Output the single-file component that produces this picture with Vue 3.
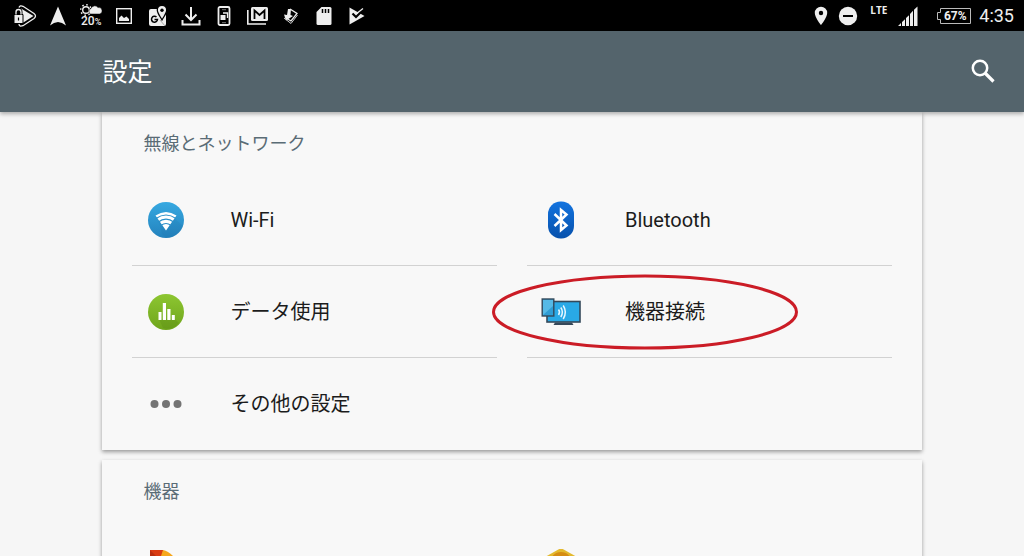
<script setup>
const wireless = [
  { id: 'wifi', label: 'Wi-Fi' },
  { id: 'bluetooth', label: 'Bluetooth' },
  { id: 'data', label: 'データ使用' },
  { id: 'device', label: '機器接続', marked: true },
  { id: 'more', label: 'その他の設定' },
]
</script>

<template>
  <div class="screen">
    <div class="status">
      <div class="notices">
        <span class="cell">
          <svg width="24" height="24" viewBox="0 0 24 24">
            <path d="M6 3.500 Q7 1 10 2.300 L21 9.500 Q24 12 21 14.500 L10 21.700 Q6 23 6 20" fill="none" stroke="#eee" stroke-width="1.300" />
            <path d="M8 4.500 L20.500 12 L8 20 Z" fill="#eee" />
            <path d="M1 10.500 h9 v9 h-9z" fill="#eee" stroke="#000" />
            <path d="M3 10.500 V8 a2.500 2.500 0 0 1 5 0 v2.500" fill="none" stroke="#000" stroke-width="3" />
            <path d="M3 10.500 V8 a2.500 2.500 0 0 1 5 0 v2.500" fill="none" stroke="#eee" stroke-width="1.300" />
            <path d="M5.500 13.500 v3" stroke="#000" stroke-width="1.200" />
          </svg>
        </span>
        <span class="cell">
          <svg width="18" height="20" viewBox="0 0 18 20"><path d="M9 0.500 L17 19.500 Q13 16 9 16 Q5 16 1 19.500 Z" fill="#eee" /></svg>
        </span>
        <span class="cell weather">
          <svg width="22" height="12" viewBox="0 0 22 12">
            <circle cx="6" cy="6" r="3.300" fill="none" stroke="#eee" stroke-width="1.400" />
            <circle cx="6" cy="6" r="5.300" fill="none" stroke="#eee" stroke-width="1.500" stroke-dasharray="1.500 2.600" />
            <path d="M10.500 10 a3 3 0 0 1 0.500 -5.500 a4 4 0 0 1 7 -1 a3.300 3.300 0 0 1 1.500 6.500 z" fill="#eee" stroke="#000" stroke-width="0.500" />
          </svg>
          <span class="rain">20<small>%</small></span>
        </span>
        <span class="cell">
          <svg width="18" height="18" viewBox="0 0 18 18">
            <rect x="1.700" y="1.700" width="14.600" height="14.600" fill="none" stroke="#eee" stroke-width="1.400" />
            <path d="M4 14 V11 L6.500 8.500 L9 11 L11.500 9.500 L14 12 V14 Z" fill="#eee" />
          </svg>
        </span>
        <span class="cell">
          <svg width="20" height="22" viewBox="0 0 20 22">
            <rect x="1" y="4" width="17" height="17" rx="2" fill="#eee" />
            <path d="M14 15 C11.500 10.500 9.300 8 9.300 5 a4.700 4.700 0 0 1 9.400 0 C18.700 8 16.500 10.500 14 15z" fill="#eee" stroke="#000" stroke-width="1.300" />
            <circle cx="14" cy="5.200" r="1.700" fill="#000" />
            <path d="M8.500 12 a3 3 0 1 0 1 2.500 h-3" fill="none" stroke="#000" stroke-width="1.500" />
            <path d="M12 15 L17 21" stroke="#aaa" stroke-width="1" />
          </svg>
        </span>
        <span class="cell">
          <svg width="20" height="20" viewBox="0 0 20 20" fill="none" stroke="#eee" stroke-width="2"><path d="M10 1 V14 M4.500 8.500 L10 14 L15.500 8.500 M1.500 14 V18.500 H18.500 V14" /></svg>
        </span>
        <span class="cell">
          <svg width="14" height="20" viewBox="0 0 14 20">
            <rect x="1.500" y="1" width="11" height="18" rx="1.500" fill="none" stroke="#eee" stroke-width="1.800" />
            <path d="M3.500 9 h5 v5 h-5z" fill="#eee" />
            <path d="M6 7 H10.500 V12" fill="none" stroke="#eee" stroke-width="1.300" />
            <path d="M5 3.700 h4 M5 16.700 h4" stroke="#777" />
          </svg>
        </span>
        <span class="cell">
          <svg width="23" height="20" viewBox="0 0 23 20">
            <rect x="5" y="1" width="17" height="14" rx="1.500" fill="#eee" />
            <path d="M8.500 13 V4.500 L13.500 9 L18.500 4.500 V13" fill="none" stroke="#000" stroke-width="1.800" />
            <path d="M1.800 4 V18 H20" fill="none" stroke="#eee" stroke-width="1.600" />
          </svg>
        </span>
        <span class="cell">
          <svg width="18" height="18" viewBox="0 0 18 18">
            <path d="M8 2 L15 6.500 L9 14 L4 11" fill="none" stroke="#eee" stroke-width="1.300" />
            <path d="M6 2 L9 2 L8.500 8 L11 9 L4 13.500 L2 7.500 L5 8 Z" fill="#eee" />
            <path d="M2 11 L9 16.500 L15.500 8" fill="none" stroke="#ccc" />
          </svg>
        </span>
        <span class="cell">
          <svg width="16" height="20" viewBox="0 0 16 20">
            <path d="M5.500 1 H14 Q15.500 1 15.500 2.500 V17.500 Q15.500 19 14 19 H2 Q0.500 19 0.500 17.500 V6 Z" fill="#eee" />
            <path d="M6.500 3 V7 M9.500 3 V7 M12.500 3 V7" stroke="#000" stroke-width="1.500" />
          </svg>
        </span>
        <span class="cell">
          <svg width="18" height="20" viewBox="0 0 18 20">
            <path d="M1.500 1.500 L16.500 10 L1.500 18.500 Z" fill="#eee" />
            <path d="M4.500 7.500 L8 11 L15 4" fill="none" stroke="#000" stroke-width="2.200" />
            <path d="M8 8 L15 2.500" stroke="#eee" stroke-width="1.300" />
          </svg>
        </span>
      </div>
      <div class="system">
        <svg width="14" height="20" viewBox="0 0 14 20"><path fill-rule="evenodd" d="M7 0.800 a6.200 6.200 0 0 0 -6.200 6.200 C0.800 11.500 7 19 7 19 S13.200 11.500 13.200 7 A6.200 6.200 0 0 0 7 0.800z M7 4.800 a2.200 2.200 0 1 1 0 4.400 a2.200 2.200 0 0 1 0 -4.400z" fill="#eee" /></svg>
        <svg class="dnd" width="20" height="20" viewBox="0 0 20 20"><circle cx="10" cy="10" r="9.200" fill="#eee" /><path d="M5 10 H15" stroke="#000" stroke-width="2" /></svg>
        <span class="lte">LTE</span>
        <svg class="signal" width="20" height="20" viewBox="0 0 20 20" fill="#eee"><path d="M0 20 L3 17 V20z M4 16 L7 13.200 V20 H4z M8 12 L11 9.200 V20 H8z M12 8 L15 4.800 V20 H12z M16 3.800 L19.500 0.500 V20 H16z" /></svg>
        <span class="battery">
          <svg width="36" height="18" viewBox="0 0 36 18"><path d="M4.500 1.500 H34.500 V16.500 H4.500 V12.500 H1.500 V5.500 H4.500z" fill="none" stroke="#bbb" /></svg>
          <span class="level">67%</span>
        </span>
        <span class="time">4:35</span>
      </div>
    </div>

    <header class="toolbar">
      <h1>設定</h1>
      <button type="button" class="search" aria-label="検索">
        <svg width="26" height="26" viewBox="0 0 26 26" fill="none" stroke="#fff"><circle cx="10" cy="9" r="7.200" stroke-width="2.500" /><path d="M15 14 L23.500 22.500" stroke-width="3.200" /></svg>
      </button>
    </header>

    <main>
      <section class="card">
        <h2>無線とネットワーク</h2>
        <div class="grid">
          <a v-for="item in wireless" :key="item.id" href="#" class="item">
            <span class="icon">
              <svg v-if="item.id === 'wifi'" width="38" height="38" viewBox="0 0 38 38">
                <defs><linearGradient id="blue" x2="0" y2="1"><stop stop-color="#37a9e1" /><stop offset="1" stop-color="#2382bd" /></linearGradient></defs>
                <circle cx="19" cy="19" r="18" fill="url(#blue)" />
                <path d="M11 17 L19 28 L27 17 L36 25 Q33 35 20 37 L15 33z" fill="#1c6d9e" opacity="0.150" />
                <path d="M8.500 14.500 Q19 7.500 29.500 14.500 L19 29.500z" fill="#fff" />
                <g fill="none" stroke="#2b90ca" stroke-width="1.200"><path d="M9 17.500 Q19 10.500 29 17.500" /><path d="M11 21.200 Q19 15 27 21.200" /><path d="M14 24.500 Q19 20.500 24 24.500" /></g>
              </svg>
              <svg v-else-if="item.id === 'bluetooth'" width="28" height="38" viewBox="0 0 28 38">
                <defs><linearGradient id="navy" x2="0" y2="1"><stop stop-color="#1273df" /><stop offset="1" stop-color="#0751ac" /></linearGradient></defs>
                <rect x="1" y="0.500" width="26" height="37" rx="12.500" fill="url(#navy)" />
                <path d="M7.500 13 L19.500 24.500 L14 29 V9 L19.500 13.500 L7.500 25" fill="none" stroke="#fff" stroke-width="2.500" />
              </svg>
              <svg v-else-if="item.id === 'data'" width="38" height="38" viewBox="0 0 38 38">
                <defs><linearGradient id="green" x2="0" y2="1"><stop stop-color="#8dc631" /><stop offset="1" stop-color="#6fa51c" /></linearGradient></defs>
                <circle cx="19" cy="19" r="18" fill="url(#green)" />
                <path d="M12 26 H28 L32 30 Q25 38 16 35z" fill="#4d7911" opacity="0.200" />
                <path d="M11.500 19 h3 v8 h-3z M15.800 10 h3.200 v17 h-3.200z M20.300 16 h3.200 v11 h-3.200z M24.800 22 h3 v5 h-3z" fill="#fff" />
              </svg>
              <svg v-else-if="item.id === 'device'" width="40" height="28" viewBox="0 0 40 28">
                <rect x="6" y="3.500" width="33" height="20.500" fill="#29a9e6" stroke="#34495a" stroke-width="1.600" />
                <path d="M14 24.500 h17 l1.500 2.500 h-20z" fill="#35485a" />
                <rect x="1.200" y="1" width="11.600" height="17" fill="#2e9dd5" stroke="#34495a" stroke-width="1.400" />
                <path d="M2 2 h10 v6 L2 17z" fill="#55b9e6" />
                <g fill="none" stroke="#e7f7ff" stroke-width="1.500"><path d="M17.500 11.500 Q19.500 14 17.500 17" /><path d="M19.800 9.500 Q23 14 19.800 19" /><path d="M22.200 7.500 Q26.500 14 22.200 21" /></g>
              </svg>
              <svg v-else width="32" height="10" viewBox="0 0 32 10" fill="#747474"><circle cx="4.500" cy="5" r="4" /><circle cx="16" cy="5" r="4" /><circle cx="27.500" cy="5" r="4" /></svg>
            </span>
            <span class="label">{{ item.label }}</span>
            <svg v-if="item.marked" class="mark" viewBox="0 0 306 76" aria-hidden="true"><ellipse cx="153" cy="38" rx="151.500" ry="36" fill="none" stroke="#cb1c26" stroke-width="3" /></svg>
          </a>
        </div>
      </section>

      <section class="card">
        <h2>機器</h2>
        <div class="grid">
          <a href="#" class="item" aria-label="表示">
            <span class="icon">
              <svg width="38" height="38" viewBox="0 0 38 38"><path d="M3 1 H16 V19 H3z" fill="#d93c12" /><path d="M3 1 L12 10 L3 19z" fill="#b92f0f" /><path d="M16 1 Q21 2 26 7 L25 19 H10z" fill="#f6a71c" /></svg>
            </span>
          </a>
          <a href="#" class="item" aria-label="通知">
            <span class="icon">
              <svg width="38" height="38" viewBox="0 0 38 38"><path d="M19 -1 L35 8 V28 L19 37 L3 28 V8z" fill="#e3b92e" /><circle cx="19" cy="14" r="11" fill="#d58c13" /></svg>
            </span>
          </a>
        </div>
      </section>
    </main>
  </div>
</template>

<style>
body {
  margin: 0;
  background: #f6f6f6;
}
</style>

<style scoped>
.screen {
  height: 100vh;
  display: flex;
  flex-direction: column;
  overflow: hidden;
  background: #f6f6f6;
  color: #1c1c1c;
  font-family: Roboto, "Noto Sans CJK JP", sans-serif;
}
svg {
  display: block;
  flex: none;
}
.status {
  flex: none;
  height: 31px;
  display: flex;
  justify-content: space-between;
  background: #000;
  color: #eee;
}
.notices {
  display: grid;
  grid-template-columns: repeat(11, 1fr);
  width: 366px;
  margin-left: 8px;
}
.cell {
  display: flex;
  align-items: center;
  justify-content: center;
}
.weather {
  flex-direction: column;
}
.rain {
  font-size: 12px;
  line-height: 11px;
  font-weight: 500;
}
.rain small {
  font-size: 9px;
}
.system {
  display: flex;
  align-items: center;
  padding-right: 10px;
}
.dnd {
  margin-left: 10px;
}
.lte {
  align-self: flex-start;
  margin: 4px 0 0 12px;
  width: 19px;
  font: bold 10px/12px "Open Sans", sans-serif;
}
.signal {
  margin: 0 0 0 9px;
}
.battery {
  display: grid;
  place-items: center;
  margin-left: 18px;
}
.battery > * {
  grid-area: 1 / 1;
}
.level {
  padding-left: 2px;
  font-size: 12px;
  line-height: 14px;
  font-weight: 700;
}
.time {
  margin-left: 7px;
  font-size: 18px;
  line-height: 31px;
}
.toolbar {
  position: relative;
  z-index: 1;
  flex: none;
  height: 81px;
  display: flex;
  align-items: center;
  justify-content: space-between;
  padding: 0 28px 0 10%;
  background: #54646c;
  color: #fff;
  box-shadow: 0 2px 4px rgba(0, 0, 0, 0.3);
}
h1 {
  margin: 0;
  padding-top: 3px;
  font-size: 25px;
  line-height: 36px;
  font-weight: 400;
}
.search {
  padding: 0;
  border: 0;
  background: none;
  color: inherit;
}
main {
  padding: 0 10%;
}
.card {
  margin-bottom: 10px;
  padding: 0 30px;
  background: #f8f8f8;
  box-shadow: 0 2px 4px rgba(0, 0, 0, 0.38);
}
h2 {
  margin: 0;
  padding: 19px 0 17px 11px;
  color: #5a6c76;
  font-size: 18px;
  line-height: 26px;
  font-weight: 400;
}
.grid {
  display: grid;
  grid-template-columns: 1fr 1fr;
  column-gap: 30px;
}
.item {
  position: relative;
  box-sizing: border-box;
  height: 92px;
  display: flex;
  align-items: center;
  border-bottom: 1px solid #d2d2d2;
  color: #1c1c1c;
  text-decoration: none;
}
.item:last-child {
  border-bottom-color: transparent;
}
.icon {
  flex: none;
  width: 67px;
  margin-right: 31px;
  display: flex;
  justify-content: center;
}
.label {
  font-size: 20px;
  line-height: 28px;
}
.mark {
  position: absolute;
  left: -35px;
  top: 8px;
  width: 306px;
  height: 76px;
}
</style>
